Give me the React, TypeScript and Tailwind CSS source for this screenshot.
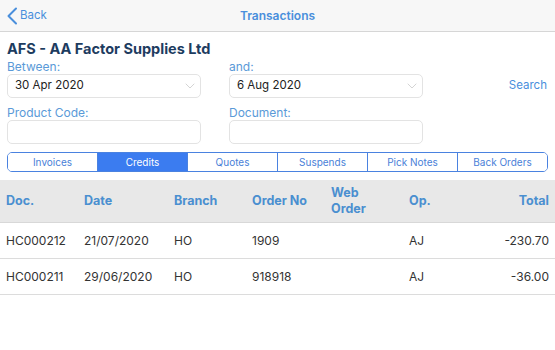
import React, { useState } from 'react';

const tabs = ['Invoices', 'Credits', 'Quotes', 'Suspends', 'Pick Notes', 'Back Orders'];

const rows = [
  { doc: 'HC000212', date: '21/07/2020', branch: 'HO', orderNo: '1909', web: '', op: 'AJ', total: '-230.70' },
  { doc: 'HC000211', date: '29/06/2020', branch: 'HO', orderNo: '918918', web: '', op: 'AJ', total: '-36.00' },
];

function Chevron() {
  return (
    <svg width="10" height="6" viewBox="0 0 10 6" fill="none" className="shrink-0">
      <path d="M1 1l4 4 4-4" stroke="#d4d4d4" strokeWidth="1" strokeLinecap="round" strokeLinejoin="round" />
    </svg>
  );
}

export default function App() {
  const [active, setActive] = useState<number>(1);

  return (
    <div className="w-[555px] h-[350px] bg-white overflow-hidden text-[12px] text-[#222]" style={{ fontFamily: 'Inter, "Noto Sans", sans-serif' }}>
      {/* nav bar */}
      <div className="relative h-[32px] bg-[#f7f7f7] border-b border-[#d6d6d6] flex items-center">
        <div className="flex items-center pl-[6px] text-[#4a8fdc] gap-[2px]">
          <svg width="12" height="18" viewBox="0 0 12 18" fill="none">
            <path d="M10 1.5L2.5 9l7.5 7.5" stroke="#4a8fdc" strokeWidth="2" strokeLinecap="round" strokeLinejoin="round" />
          </svg>
          <span className="text-[11.5px]">Back</span>
        </div>
        <div className="absolute inset-0 flex items-center justify-center pointer-events-none">
          <span className="font-semibold text-[12px] text-[#4a8fdc]">Transactions</span>
        </div>
      </div>

      {/* filters */}
      <div className="px-[7px] pt-[8px]">
        <div className="font-bold text-[14.5px] leading-[18px] text-[#1d3c5f]">AFS - AA Factor Supplies Ltd</div>
        <div className="flex items-end mt-[1px]">
          <div className="w-[194px]">
            <div className="text-[#5a9ad8] leading-[15px]">Between:</div>
            <div className="h-[24px] border border-[#e3e3e3] rounded-[5px] flex items-center justify-between pl-[7px] pr-[5px]">
              <span className="text-[11.5px]">30 Apr 2020</span>
              <Chevron />
            </div>
          </div>
          <div className="w-[194px] ml-[28px]">
            <div className="text-[#5a9ad8] leading-[15px]">and:</div>
            <div className="h-[24px] border border-[#e3e3e3] rounded-[5px] flex items-center justify-between pl-[7px] pr-[5px]">
              <span className="text-[11.5px]">6 Aug 2020</span>
              <Chevron />
            </div>
          </div>
          <div className="flex-1 flex justify-end h-[24px] items-center pr-[1px]">
            <span className="text-[#4a8fdc] text-[11.5px]">Search</span>
          </div>
        </div>
        <div className="flex mt-[7px]">
          <div className="w-[194px]">
            <div className="text-[#5a9ad8] leading-[15px]">Product Code:</div>
            <div className="h-[24px] border border-[#e3e3e3] rounded-[5px]" />
          </div>
          <div className="w-[194px] ml-[28px]">
            <div className="text-[#5a9ad8] leading-[15px]">Document:</div>
            <div className="h-[24px] border border-[#e3e3e3] rounded-[5px]" />
          </div>
        </div>

        {/* segmented control */}
        <div className="mt-[8px] w-[541px] h-[20px] flex border border-[#4a82e0] rounded-[5px] overflow-hidden">
          {tabs.map((t, i) => (
            <button
              key={t}
              onClick={() => setActive(i)}
              className={
                'flex-1 text-[10px] leading-none ' +
                (i > 0 ? 'border-l border-[#4a82e0] ' : '') +
                (i === active ? 'bg-[#3b7cf0] text-white' : 'bg-white text-[#4a7fd8]')
              }
            >
              {t}
            </button>
          ))}
        </div>
      </div>

      {/* table */}
      <div className="mt-[8px]">
        <div className="h-[43px] bg-[#e8e8e8] border-b border-[#d8d8d8] flex items-center font-bold text-[#4a8fd0] text-[12.5px]">
          <div className="w-[84px] pl-[6px]">Doc.</div>
          <div className="w-[90px]">Date</div>
          <div className="w-[78px]">Branch</div>
          <div className="w-[79px]">Order No</div>
          <div className="w-[78px] leading-[16px]">Web<br />Order</div>
          <div className="w-[60px]">Op.</div>
          <div className="flex-1 text-right pr-[6px]">Total</div>
        </div>
        {rows.map((r) => (
          <div key={r.doc} className="h-[36px] border-b border-[#dcdcdc] flex items-center text-[12px] text-[#333]">
            <div className="w-[84px] pl-[6px]">{r.doc}</div>
            <div className="w-[90px]">{r.date}</div>
            <div className="w-[78px]">{r.branch}</div>
            <div className="w-[79px]">{r.orderNo}</div>
            <div className="w-[78px]">{r.web}</div>
            <div className="w-[60px]">{r.op}</div>
            <div className="flex-1 text-right pr-[6px]">{r.total}</div>
          </div>
        ))}
      </div>
    </div>
  );
}
